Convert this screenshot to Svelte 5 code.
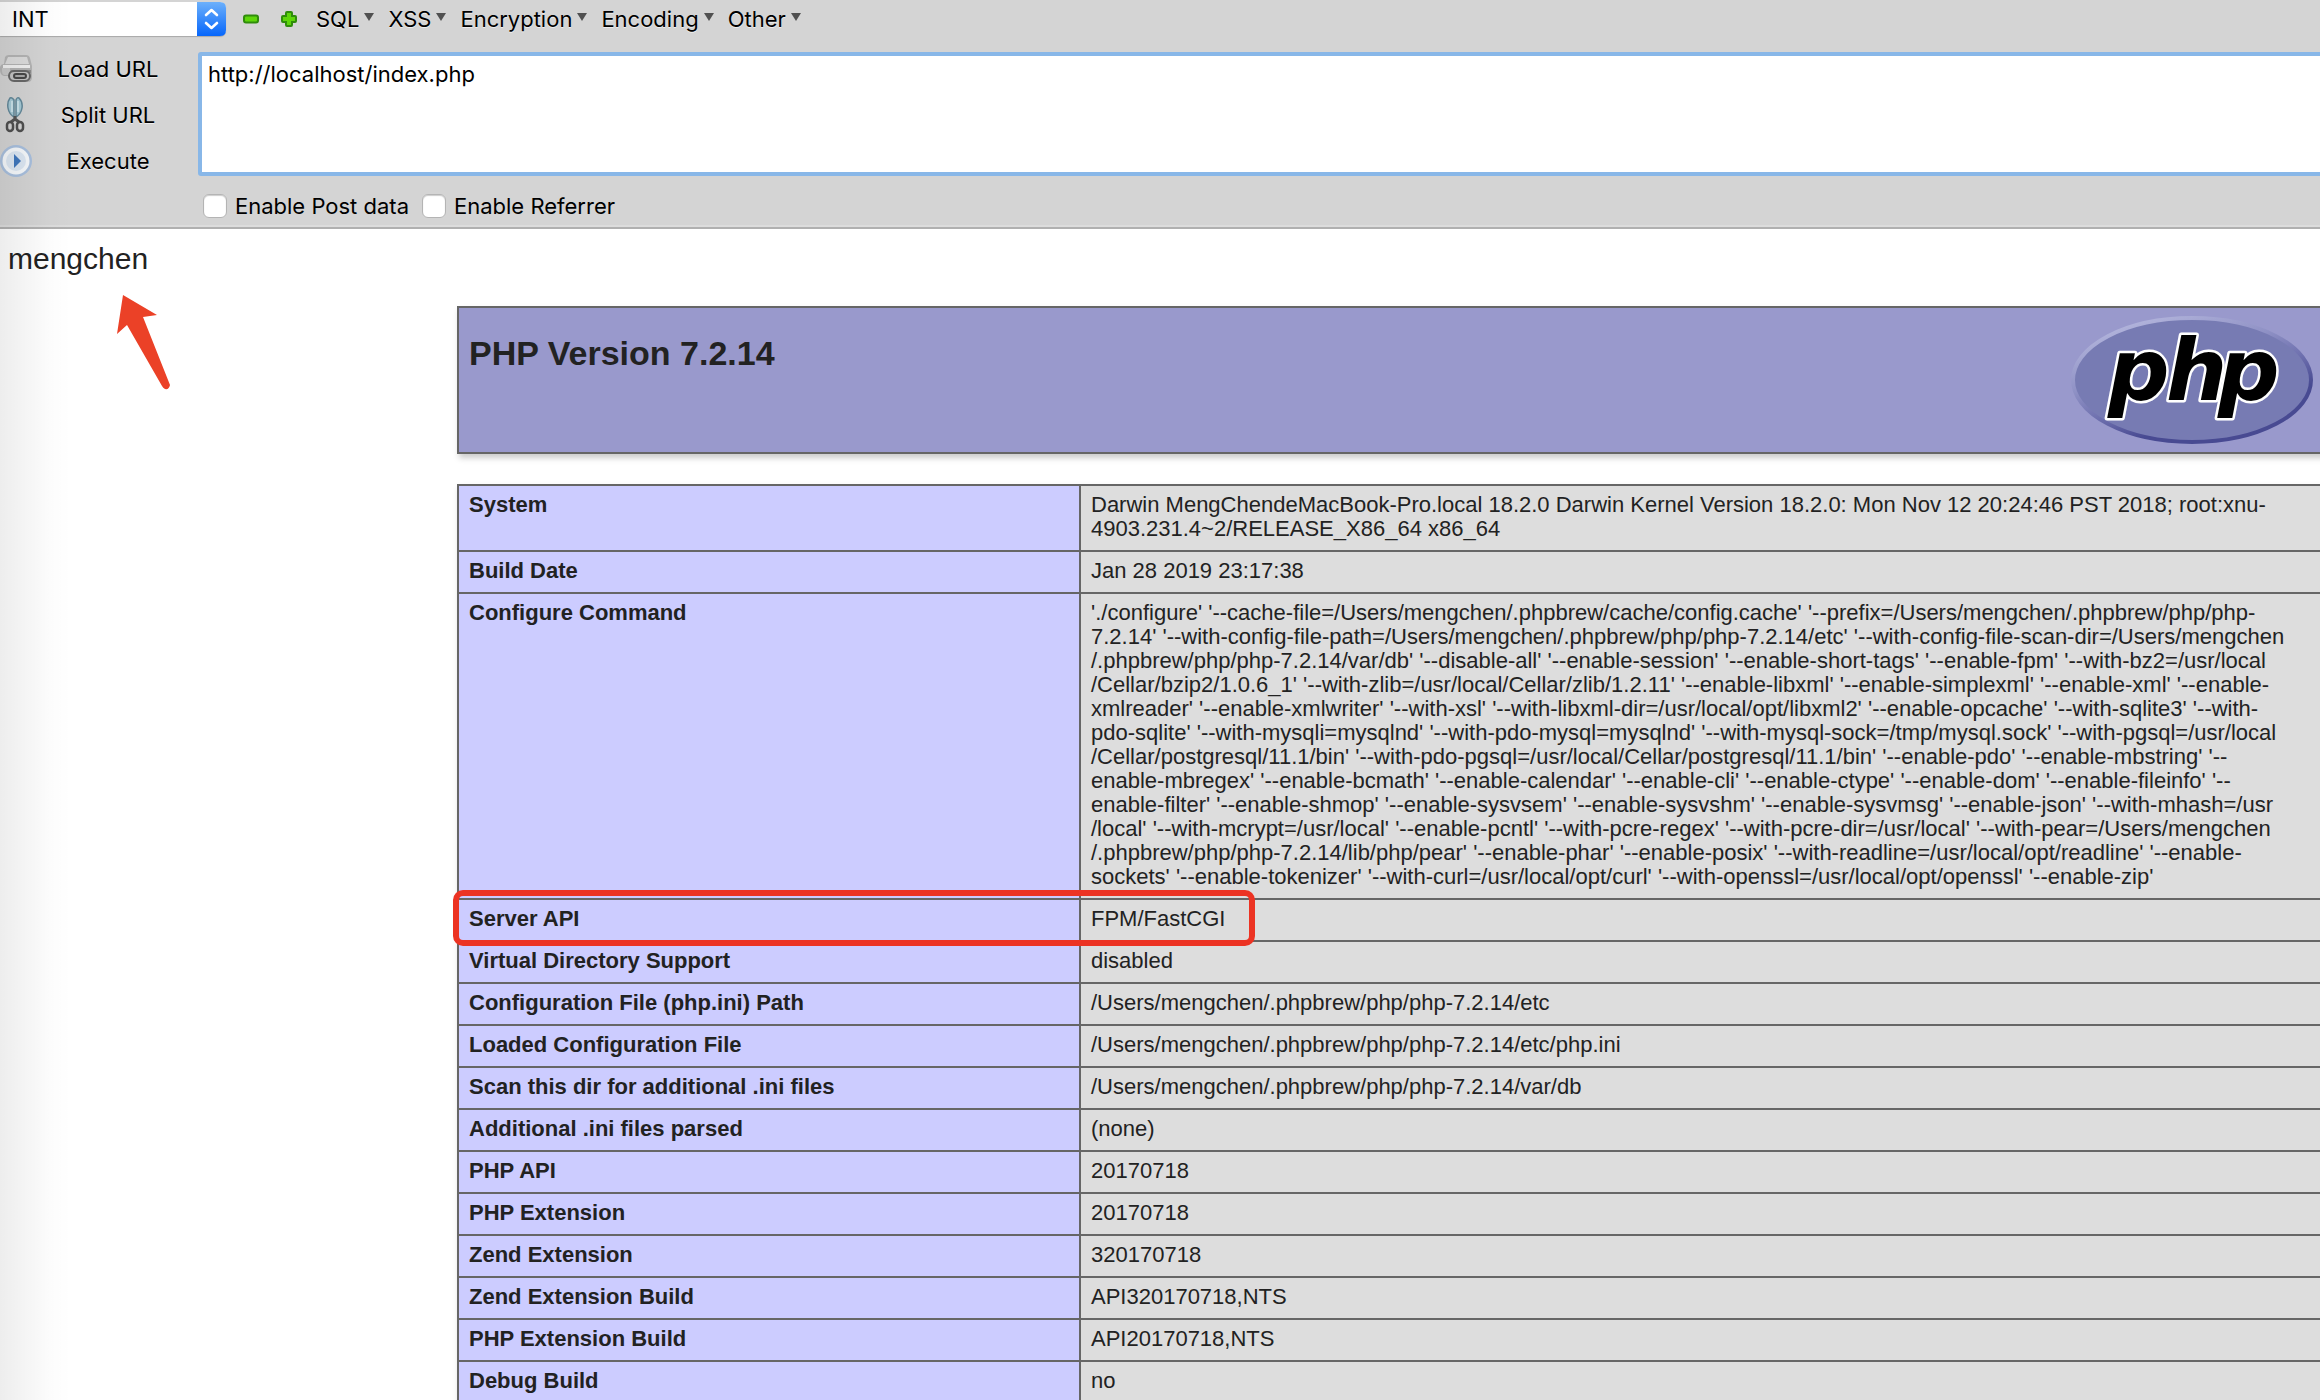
<script>
  const menus = ['SQL', 'XSS', 'Encryption', 'Encoding', 'Other'];
  let url = $state('http://localhost/index.php');
  let post = $state(false);
  let referrer = $state(false);

  const configure = `'./configure' '--cache-file=/Users/mengchen/.phpbrew/cache/config.cache' '--prefix=/Users/mengchen/.phpbrew/php/php-
7.2.14' '--with-config-file-path=/Users/mengchen/.phpbrew/php/php-7.2.14/etc' '--with-config-file-scan-dir=/Users/mengchen
/.phpbrew/php/php-7.2.14/var/db' '--disable-all' '--enable-session' '--enable-short-tags' '--enable-fpm' '--with-bz2=/usr/local
/Cellar/bzip2/1.0.6_1' '--with-zlib=/usr/local/Cellar/zlib/1.2.11' '--enable-libxml' '--enable-simplexml' '--enable-xml' '--enable-
xmlreader' '--enable-xmlwriter' '--with-xsl' '--with-libxml-dir=/usr/local/opt/libxml2' '--enable-opcache' '--with-sqlite3' '--with-
pdo-sqlite' '--with-mysqli=mysqlnd' '--with-pdo-mysql=mysqlnd' '--with-mysql-sock=/tmp/mysql.sock' '--with-pgsql=/usr/local
/Cellar/postgresql/11.1/bin' '--with-pdo-pgsql=/usr/local/Cellar/postgresql/11.1/bin' '--enable-pdo' '--enable-mbstring' '--
enable-mbregex' '--enable-bcmath' '--enable-calendar' '--enable-cli' '--enable-ctype' '--enable-dom' '--enable-fileinfo' '--
enable-filter' '--enable-shmop' '--enable-sysvsem' '--enable-sysvshm' '--enable-sysvmsg' '--enable-json' '--with-mhash=/usr
/local' '--with-mcrypt=/usr/local' '--enable-pcntl' '--with-pcre-regex' '--with-pcre-dir=/usr/local' '--with-pear=/Users/mengchen
/.phpbrew/php/php-7.2.14/lib/php/pear' '--enable-phar' '--enable-posix' '--with-readline=/usr/local/opt/readline' '--enable-
sockets' '--enable-tokenizer' '--with-curl=/usr/local/opt/curl' '--with-openssl=/usr/local/opt/openssl' '--enable-zip'`;

  const rows = [
    ['System', `Darwin MengChendeMacBook-Pro.local 18.2.0 Darwin Kernel Version 18.2.0: Mon Nov 12 20:24:46 PST 2018; root:xnu-
4903.231.4~2/RELEASE_X86_64 x86_64`],
    ['Build Date', 'Jan 28 2019 23:17:38'],
    ['Configure Command', configure],
    ['Server API', 'FPM/FastCGI'],
    ['Virtual Directory Support', 'disabled'],
    ['Configuration File (php.ini) Path', '/Users/mengchen/.phpbrew/php/php-7.2.14/etc'],
    ['Loaded Configuration File', '/Users/mengchen/.phpbrew/php/php-7.2.14/etc/php.ini'],
    ['Scan this dir for additional .ini files', '/Users/mengchen/.phpbrew/php/php-7.2.14/var/db'],
    ['Additional .ini files parsed', '(none)'],
    ['PHP API', '20170718'],
    ['PHP Extension', '20170718'],
    ['Zend Extension', '320170718'],
    ['Zend Extension Build', 'API320170718,NTS'],
    ['PHP Extension Build', 'API20170718,NTS'],
    ['Debug Build', 'no']
  ];
</script>

<div class="window">
  <header class="hackbar">
    <div class="menubar">
      <div class="picker">
        <select aria-label="Type">
          <option>INT</option>
        </select>
        <svg class="stepper" viewBox="0 0 29 34" aria-hidden="true">
          <defs>
            <linearGradient id="blue" x1="0" y1="0" x2="0" y2="1">
              <stop offset="0" stop-color="#6cb0fb" />
              <stop offset="1" stop-color="#0666fb" />
            </linearGradient>
          </defs>
          <path d="M0 0H23Q29 0 29 6V28Q29 34 23 34H0Z" fill="url(#blue)" />
          <path d="M9 13L14.500 8L20 13M9 21L14.500 26L20 21" fill="none" stroke="#fff" stroke-width="2.600" stroke-linecap="round" stroke-linejoin="round" />
        </svg>
      </div>
      <button class="sign" aria-label="Remove">
        <svg viewBox="0 0 18 18"><rect x="2" y="5.500" width="14" height="7" rx="2" fill="#5ed60a" stroke="#2f8c0b" stroke-width="2" /></svg>
      </button>
      <button class="sign" aria-label="Add">
        <svg viewBox="0 0 18 18"><path d="M7 2H11Q12 2 12 3V6H15Q16 6 16 7V11Q16 12 15 12H12V15Q12 16 11 16H7Q6 16 6 15V12H3Q2 12 2 11V7Q2 6 3 6H6V3Q6 2 7 2Z" fill="#5ed60a" stroke="#2f8c0b" stroke-width="2" /></svg>
      </button>
      <nav>
        {#each menus as name}
          <button class="menu">
            {name}
            <svg viewBox="0 0 10 8" aria-hidden="true"><path d="M0 0H10L5 8Z" fill="#505050" /></svg>
          </button>
        {/each}
      </nav>
    </div>

    <div class="editor">
      <div class="actions">
        <button>
          <svg viewBox="0 0 32 32" aria-hidden="true">
            <path d="M5 4Q6 2 9 2H26Q29 2 30 5L32 13V24Q32 29 28 29H16L9 23H4Q0 22 0 17V14Q1 11 4 11Z" fill="#b4b4b4" />
            <path d="M8 4H27L29 11H5Z" fill="#dcdcdc" />
            <path d="M3 12H30V15H3Z" fill="#f0f0f0" />
            <path d="M2 15H10V22H4Q2 21 2 18Z" fill="#c8c8c8" />
            <path d="M11 17H31V20H9Z" fill="#8c8c8c" />
            <rect x="9" y="18" width="21" height="10" rx="5" fill="#c4c4c4" stroke="#686868" stroke-width="2" />
            <rect x="14" y="21" width="12" height="4" rx="2" fill="#aaa" stroke="#484848" stroke-width="2" />
          </svg>
          <span>Load URL</span>
        </button>
        <button>
          <svg viewBox="0 0 32 36" aria-hidden="true">
            <path d="M10 1Q7 5 8 11Q9 17 14 20V3Q12 0 10 1Z" fill="#a6cad6" stroke="#64899a" stroke-width="1.500" />
            <path d="M19 1Q23 5 22 11Q21 17 16 20V3Q17 0 19 1Z" fill="#a6cad6" stroke="#64899a" stroke-width="1.500" />
            <path d="M12 4V15M18 4V15" stroke="#d5e9ef" stroke-width="1.500" />
            <path d="M15 19V23M15 22L11 25M15 22L19 25" stroke="#555" stroke-width="3" />
            <rect x="7" y="25" width="6" height="9" rx="3" fill="none" stroke="#505050" stroke-width="2.500" />
            <rect x="17" y="25" width="6" height="9" rx="3" fill="none" stroke="#505050" stroke-width="2.500" />
          </svg>
          <span>Split URL</span>
        </button>
        <button>
          <svg viewBox="0 0 32 32" aria-hidden="true">
            <circle cx="16" cy="16" r="16" fill="#a9c0de" />
            <circle cx="16" cy="16" r="13.500" fill="#f6f9fc" />
            <circle cx="16" cy="16" r="10" fill="#dce7f3" />
            <path d="M14 9L21 16L14 23Z" fill="#3f77bd" />
          </svg>
          <span>Execute</span>
        </button>
      </div>
      <div class="request">
        <textarea aria-label="URL" spellcheck="false" bind:value={url}></textarea>
        <div class="options">
          <label><input type="checkbox" bind:checked={post} />Enable Post data</label>
          <label><input type="checkbox" bind:checked={referrer} />Enable Referrer</label>
        </div>
      </div>
    </div>
  </header>

  <main>
    <p>mengchen</p>
    <svg class="arrow" viewBox="0 0 54 96" aria-hidden="true">
      <path d="M6 0L40 20L26 22L53 90Q52 95 48 94Q46 93 45 91L10 30L0 39Z" fill="#eb4127" />
    </svg>

    <div class="info">
      <div class="banner">
        <h1>PHP Version 7.2.14</h1>
        <svg class="logo" viewBox="0 0 242 128" role="img" aria-label="PHP logo">
          <defs>
            <linearGradient id="rim" x1="0.200" y1="0" x2="0.800" y2="1">
              <stop offset="0" stop-color="#b6b8de" />
              <stop offset="0.350" stop-color="#8f91c5" />
              <stop offset="0.550" stop-color="#6f71af" />
              <stop offset="0.750" stop-color="#484a92" />
              <stop offset="1" stop-color="#484a92" />
            </linearGradient>
          </defs>
          <ellipse cx="121" cy="64" rx="119" ry="62" fill="#777bb3" stroke="url(#rim)" stroke-width="4" />
          <text x="37 95 147" y="84">php</text>
        </svg>
      </div>

      <table>
        <colgroup><col class="key" /><col /></colgroup>
        <tbody>
          {#each rows as [key, value]}
            <tr>
              <th scope="row">{key}{#if key === 'Server API'}<span class="mark"></span>{/if}</th>
              <td>{value}</td>
            </tr>
          {/each}
        </tbody>
      </table>
    </div>
  </main>
</div>

<style>
  :global(body) {
    margin: 0;
    background: #fff;
  }
  .window {
    position: relative;
    height: 100vh;
    overflow: hidden;
    color: #222;
    font-family: 'Liberation Sans', Arial, sans-serif;
  }
  .window::after {
    content: '';
    position: absolute;
    inset: 0 auto 0 0;
    width: 72px;
    background: linear-gradient(90deg, rgba(0, 0, 0, 0.07), rgba(0, 0, 0, 0.01) 70%, transparent);
    pointer-events: none;
  }
  button {
    border: 0;
    padding: 0;
    background: none;
    color: inherit;
    font: inherit;
  }
  svg {
    display: block;
    flex: none;
  }

  .hackbar {
    background: #d4d4d4;
    border-bottom: 2px solid #b0b0b0;
    box-shadow: inset 0 -2px #dcdcdc;
    color: #000;
    font-family: Inter, 'Open Sans', sans-serif;
    font-size: 22px;
    line-height: 26px;
  }
  .menubar {
    display: flex;
    align-items: center;
    height: 38px;
  }
  .picker {
    display: flex;
    width: 226px;
    height: 34px;
    margin-right: 16px;
    border-radius: 0 6px 6px 0;
    background: #fff;
    box-shadow: 0 1px 1px #a8a8a8;
  }
  .picker select {
    flex: 1;
    appearance: none;
    border: 0;
    padding: 0 12px;
    background: none;
    color: #000;
    font: inherit;
  }
  .stepper {
    width: 29px;
    height: 34px;
  }
  .sign {
    margin-right: 20px;
  }
  .sign svg {
    width: 18px;
    height: 18px;
  }
  nav {
    display: flex;
    gap: 14px;
    margin-left: -2px;
  }
  .menu {
    display: flex;
    gap: 5px;
    text-shadow: 0 1px #eee;
  }
  .menu svg {
    width: 10px;
    height: 8px;
    margin-top: 7px;
  }
  .editor {
    display: grid;
    grid-template-columns: 198px 1fr;
    padding-top: 14px;
  }
  .actions button {
    display: flex;
    align-items: center;
    width: 184px;
    height: 46px;
    margin-top: -6px;
    margin-bottom: 6px;
    text-shadow: 0 1px #eee;
  }
  .actions svg {
    width: 32px;
    height: 36px;
  }
  .actions span {
    flex: 1;
    text-align: center;
  }
  .request {
    margin-right: -8px;
  }
  textarea {
    display: block;
    box-sizing: border-box;
    width: 100%;
    height: 124px;
    border: 4px solid #88b7e8;
    border-radius: 3px;
    padding: 5px 6px;
    outline: 0;
    background: #fff;
    color: #000;
    font: inherit;
    resize: none;
  }
  .options {
    display: flex;
    gap: 13px;
    padding: 17px 5px 8px;
  }
  .options label {
    display: flex;
    align-items: center;
    gap: 8px;
  }
  .options input {
    appearance: none;
    width: 24px;
    height: 24px;
    margin: 0;
    border: 1px solid #b4b4b4;
    border-radius: 6px;
    background: #fff;
    box-shadow: inset 0 1px 1px #ccc;
  }
  .options input:checked {
    background: #0666fb;
  }

  main {
    position: relative;
  }
  p {
    margin: 0;
    padding: 13px 8px 30px;
    font-size: 30px;
    line-height: 34px;
  }
  .arrow {
    position: absolute;
    left: 117px;
    top: 66px;
    width: 54px;
    height: 96px;
  }
  .info {
    margin: 0 -5px 0 457px;
  }
  .banner {
    display: flex;
    justify-content: space-between;
    margin-bottom: 30px;
    border: 2px solid #666;
    padding: 8px 10px;
    background: #9999cc;
    box-shadow: 2px 4px 6px #ccc;
  }
  h1 {
    margin: 17px 0 0;
    font-size: 34px;
    line-height: 40px;
  }
  .logo {
    width: 242px;
    height: 128px;
  }
  .logo text {
    font: italic bold 86px 'DejaVu Sans', sans-serif;
    fill: #000;
    stroke: #fff;
    stroke-width: 5px;
    stroke-linejoin: round;
    paint-order: stroke;
  }
  table {
    width: 100%;
    table-layout: fixed;
    border-collapse: collapse;
    box-shadow: 2px 4px 6px #ccc;
    font-size: 22px;
    line-height: 24px;
  }
  .key {
    width: 622px;
  }
  th,
  td {
    border: 2px solid #666;
    padding: 7px 10px 9px;
    text-align: left;
    vertical-align: top;
    white-space: pre-wrap;
  }
  th {
    position: relative;
    background: #ccccff;
  }
  td {
    background: #ddd;
  }
  .mark {
    position: absolute;
    z-index: 1;
    top: -10px;
    left: -6px;
    width: 790px;
    height: 44px;
    border: 6px solid #ec3323;
    border-radius: 10px;
  }
</style>
